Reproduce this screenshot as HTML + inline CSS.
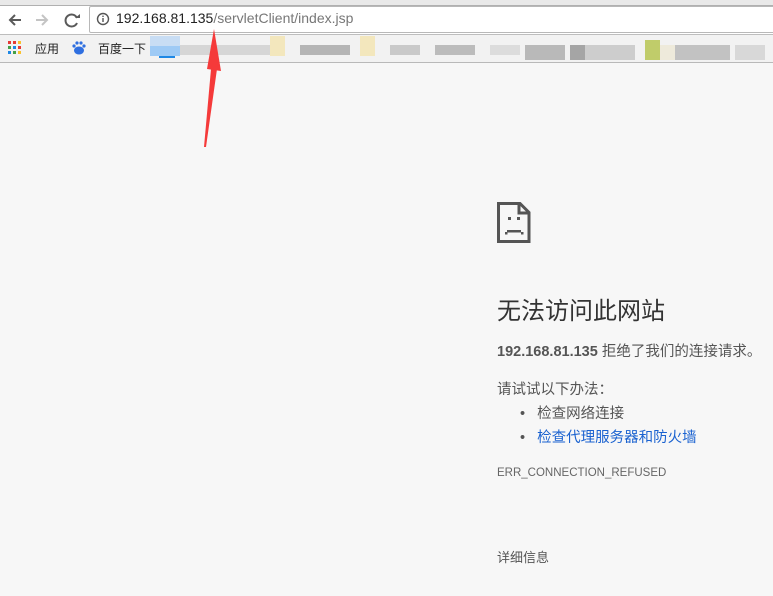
<!DOCTYPE html>
<html><head><meta charset="utf-8"><style>
*{margin:0;padding:0;box-sizing:border-box}
body{width:773px;height:596px;overflow:hidden;background:#f7f7f7;font-family:"Liberation Sans","Noto Sans CJK SC",sans-serif;position:relative;color:#333}
.a{position:absolute}
</style></head><body>
<div class="a" style="left:0;top:0;width:773px;height:6px;background:#e9e9e9;border-bottom:1px solid #b0b0b0"></div>
<div class="a" style="left:0;top:6px;width:773px;height:28px;background:#fff"></div>
<div class="a" style="left:0;top:34px;width:773px;height:29px;background:#f2f2f2;border-top:1px solid #bdbdbd;border-bottom:1px solid #b9b9b9"></div>
<svg class="a" style="left:0;top:8px" width="90" height="24" viewBox="0 0 90 24">
<path d="M21 12H10M15 7l-5 5 5 5" stroke="#5a5a5a" stroke-width="2" fill="none"/>
<path d="M36 12h11M42 7l5 5-5 5" stroke="#c4c4c4" stroke-width="2" fill="none"/>
<path d="M77 10a6 6 0 1 0 0 5" stroke="#5a5a5a" stroke-width="2" fill="none"/><path d="M74 8h5v-4z" fill="#5a5a5a" transform="translate(1,2)"/>
</svg>
<div class="a" style="left:89px;top:6px;width:690px;height:27px;border:1px solid #b8b8b8;border-radius:2px;background:#fff"></div>
<svg class="a" style="left:96px;top:12px" width="14" height="14"><circle cx="7" cy="7" r="5.5" stroke="#555" stroke-width="1.4" fill="none"/><rect x="6.3" y="6" width="1.4" height="4" fill="#555"/><rect x="6.3" y="3.6" width="1.4" height="1.4" fill="#555"/></svg>
<div class="a" style="left:116px;top:10px;font-size:14px;color:#222;white-space:nowrap">192.168.81.135<span style="color:#777">/servletClient/index.jsp</span></div>
<svg class="a" style="left:8px;top:41px" width="14" height="14"><g>
<rect x="0" y="0" width="3" height="3" fill="#e53935"/><rect x="5" y="0" width="3" height="3" fill="#e53935"/><rect x="10" y="0" width="3" height="3" fill="#fbc02d"/>
<rect x="0" y="5" width="3" height="3" fill="#43a047"/><rect x="5" y="5" width="3" height="3" fill="#1e88e5"/><rect x="10" y="5" width="3" height="3" fill="#e53935"/>
<rect x="0" y="10" width="3" height="3" fill="#1e88e5"/><rect x="5" y="10" width="3" height="3" fill="#43a047"/><rect x="10" y="10" width="3" height="3" fill="#fbc02d"/></g></svg>
<div class="a" style="left:35px;top:40px;font-size:12px;color:#222">应用</div>
<svg class="a" style="left:72px;top:41px" width="14" height="14"><ellipse cx="7" cy="9.5" rx="5" ry="4" fill="#2f6fe0"/><circle cx="2" cy="5" r="1.6" fill="#2f6fe0"/><circle cx="12" cy="5" r="1.6" fill="#2f6fe0"/><circle cx="5" cy="2" r="1.6" fill="#2f6fe0"/><circle cx="9" cy="2" r="1.6" fill="#2f6fe0"/></svg>
<div class="a" style="left:98px;top:40px;font-size:12px;color:#222">百度一下</div>
<div class="a" style="left:150px;top:36px;width:30px;height:10px;background:#c8ddf4"></div>
<div class="a" style="left:150px;top:46px;width:30px;height:10px;background:#9ecaf5"></div>
<div class="a" style="left:159px;top:56px;width:16px;height:2px;background:#1e88e5"></div>
<div class="a" style="left:180px;top:45px;width:100px;height:10px;background:#d6d6d6"></div>
<div class="a" style="left:270px;top:36px;width:15px;height:20px;background:#f3e7bd"></div>
<div class="a" style="left:300px;top:45px;width:50px;height:10px;background:#b5b5b5"></div>
<div class="a" style="left:360px;top:36px;width:15px;height:20px;background:#f3e7bd"></div>
<div class="a" style="left:390px;top:45px;width:30px;height:10px;background:#c9c9c9"></div>
<div class="a" style="left:435px;top:45px;width:40px;height:10px;background:#bcbcbc"></div>
<div class="a" style="left:490px;top:45px;width:30px;height:10px;background:#dcdcdc"></div>
<div class="a" style="left:525px;top:45px;width:40px;height:15px;background:#b9b9b9"></div>
<div class="a" style="left:570px;top:45px;width:15px;height:15px;background:#a5a5a5"></div>
<div class="a" style="left:585px;top:45px;width:50px;height:15px;background:#cdcdcd"></div>
<div class="a" style="left:645px;top:40px;width:15px;height:20px;background:#c0cc6a"></div>
<div class="a" style="left:660px;top:45px;width:15px;height:15px;background:#eeeadb"></div>
<div class="a" style="left:675px;top:45px;width:55px;height:15px;background:#c2c2c2"></div>
<div class="a" style="left:735px;top:45px;width:30px;height:15px;background:#d8d8d8"></div>
<svg class="a" style="left:190px;top:25px" width="40" height="125"><path d="M21 44L27 44L16 122L14 122Z" fill="#f53a3a"/><path d="M24 4L31 46L17 44Z" fill="#f53a3a"/></svg>
<svg class="a" style="left:497px;top:202px" width="34" height="42"><path d="M1.5 1.5H23L32 10.5V39.5H1.5Z" stroke="#555" stroke-width="3" fill="none"/><path d="M22 1.5V11H32" stroke="#555" stroke-width="3" fill="none"/><rect x="11" y="15" width="3" height="3" fill="#555"/><rect x="20" y="15" width="3" height="3" fill="#555"/><rect x="10" y="28" width="14" height="2.5" fill="#555"/><rect x="8" y="30" width="2.5" height="2.5" fill="#555"/><rect x="24" y="30" width="2.5" height="2.5" fill="#555"/></svg>
<div class="a" style="left:497px;top:291px;font-size:24px;color:#333;white-space:nowrap">无法访问此网站</div>
<div class="a" style="left:497px;top:340px;font-size:14.5px;color:#555;white-space:nowrap"><b>192.168.81.135</b> 拒绝了我们的连接请求。</div>
<div class="a" style="left:497px;top:378px;font-size:14.5px;color:#555;white-space:nowrap">请试试以下办法：</div>
<div class="a" style="left:520px;top:402px;font-size:14.5px;color:#555;white-space:nowrap">•&nbsp;&nbsp;&nbsp;检查网络连接</div>
<div class="a" style="left:520px;top:426px;font-size:14.5px;color:#555;white-space:nowrap">•&nbsp;&nbsp;&nbsp;<span style="color:#1a62d0">检查代理服务器和防火墙</span></div>
<div class="a" style="left:497px;top:467px;font-size:11.5px;color:#666;white-space:nowrap">ERR_CONNECTION_REFUSED</div>
<div class="a" style="left:497px;top:547px;font-size:13px;color:#555;white-space:nowrap">详细信息</div>
</body></html>
